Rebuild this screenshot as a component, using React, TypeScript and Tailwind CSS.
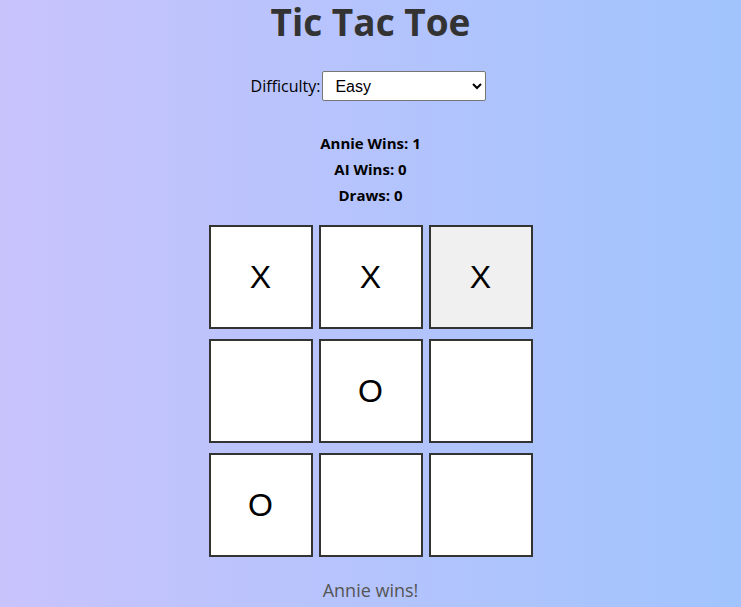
import { useState } from "react";

const board = ["X", "X", "X", "", "O", "", "O", "", ""];

export default function App() {
  const [difficulty, setDifficulty] = useState("easy");

  return (
    <div className="min-h-[607px] w-full bg-[linear-gradient(to_right,#c9c3fc,#a1c4fd)] text-center font-['Segoe_UI','Open_Sans',sans-serif]">
      <h1 className="pt-[1px] text-[37px] font-bold leading-[42px] text-[#333]">
        Tic Tac Toe
      </h1>

      <div className="mt-[28px] flex items-center justify-center gap-[2px] pr-[4px] text-[16px] text-black">
        <label htmlFor="difficulty">Difficulty:</label>
        <select
          id="difficulty"
          value={difficulty}
          onChange={(e) => setDifficulty(e.target.value)}
          className="h-[30px] w-[164px] rounded-[2px] border border-[#767676] bg-white px-[8px] font-['Liberation_Sans',Arial,sans-serif] text-[16px]"
        >
          <option value="easy">Easy</option>
          <option value="medium">Medium</option>
          <option value="hard">Hard</option>
        </select>
      </div>

      <div className="mt-[29px] flex flex-col text-[15px] font-bold leading-[26px] text-black">
        <p>Annie Wins: 1</p>
        <p>AI Wins: 0</p>
        <p>Draws: 0</p>
      </div>

      <div className="mx-auto mt-[17px] grid w-[324px] grid-cols-[repeat(3,104px)] gap-x-[6px] gap-y-[10px]">
        {board.map((cell, index) => (
          <button
            key={index}
            className={`flex h-[104px] w-[104px] items-center justify-center border-2 border-[#333] font-['Liberation_Sans',Arial,sans-serif] text-[32px] text-black ${index === 2 ? "bg-[#f0f0f0]" : "bg-white"}`}
          >
            {cell}
          </button>
        ))}
      </div>

      <p className="mt-[20px] text-[18px] text-[#555]">Annie wins!</p>
    </div>
  );
}
